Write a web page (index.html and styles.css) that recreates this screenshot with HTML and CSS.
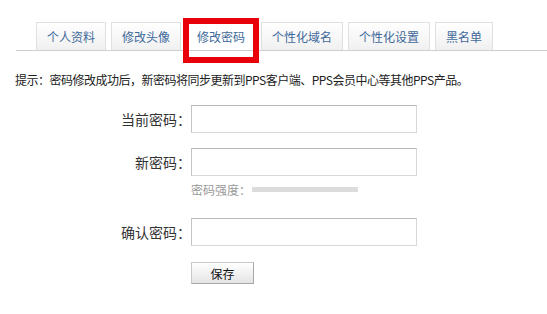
FILE: index.html
```html
<!DOCTYPE html>
<html lang="zh-CN">
<head>
<meta charset="utf-8">
<link rel="stylesheet" href="styles.css">
</head>
<body>
<div class="page">
  <div class="tabs">
    <a class="tab">个人资料</a>
    <a class="tab">修改头像</a>
    <a class="tab active">修改密码<span class="mark"></span></a>
    <a class="tab">个性化域名</a>
    <a class="tab">个性化设置</a>
    <a class="tab">黑名单</a>
  </div>
  <p class="hint">提示：密码修改成功后，新密码将同步更新到PPS客户端、PPS会员中心等其他PPS产品。</p>
  <div class="form">
    <div class="row">
      <label class="label">当前密码：</label>
      <input class="field" type="password">
    </div>
    <div class="row row-new">
      <label class="label">新密码：</label>
      <input class="field" type="password">
    </div>
    <div class="row row-strength">
      <span class="label"></span>
      <div class="strength"><span class="strength-text">密码强度：</span><span class="bar"></span></div>
    </div>
    <div class="row row-confirm">
      <label class="label">确认密码：</label>
      <input class="field" type="password">
    </div>
    <div class="row row-btn">
      <span class="label"></span>
      <button class="btn">保存</button>
    </div>
  </div>
</div>
</body>
</html>
```
FILE: styles.css
```css
html, body {
  margin: 0;
  padding: 0;
  background: #fff;
}
body {
  font-family: "Noto Sans CJK SC", "Liberation Sans", sans-serif;
  font-size: 12px;
  color: #333;
}
.page {
  width: 547px;
  height: 314px;
  overflow: hidden;
}
.tabs {
  display: flex;
  gap: 5px;
  margin: 22px 0 0 16px;
  padding-left: 20px;
  border-bottom: 1px solid #cfcfcf;
  height: 28px;
}
.tab {
  position: relative;
  box-sizing: border-box;
  height: 28px;
  padding: 0 10px;
  display: flex;
  align-items: center;
  border: 1px solid #e0e0e0;
  border-bottom: none;
  background: linear-gradient(#ffffff, #f0f0f0);
  color: #40699a;
  font-size: 12px;
  line-height: 1;
}
.tab.active {
  background: #fff;
  border-color: #fff;
}
.mark {
  position: absolute;
  left: -4px;
  top: -5px;
  width: 76px;
  height: 45px;
  box-sizing: border-box;
  border: 6px solid #e8000b;
}
.hint {
  margin: 21px 0 0 15px;
  line-height: 16px;
  font-size: 12px;
  letter-spacing: -0.5px;
  color: #222;
}
.form {
  margin-top: 17px;
  display: flex;
  flex-direction: column;
}
.row {
  display: flex;
  align-items: center;
}
.label {
  width: 191px;
  flex: none;
  text-align: right;
  font-size: 14px;
  color: #333;
}
.field {
  box-sizing: border-box;
  width: 226px;
  height: 28px;
  margin: 0;
  padding: 0 4px;
  border: 1px solid #d8d8d8;
  border-top-color: #b8b8b8;
  border-left-color: #c4c4c4;
  background: #fff;
  outline: none;
}
.row-new {
  margin-top: 15px;
}
.row-strength {
  margin-top: 6px;
  height: 14px;
}
.strength {
  display: flex;
  align-items: center;
}
.strength-text {
  font-size: 12px;
  color: #999;
}
.bar {
  display: block;
  width: 106px;
  height: 5px;
  background: #dcdcdc;
  margin-left: 1px;
}
.row-confirm {
  margin-top: 22px;
}
.row-btn {
  margin-top: 16px;
}
.btn {
  box-sizing: border-box;
  width: 63px;
  height: 22px;
  margin: 0;
  padding: 0;
  border: 1px solid #a8a8a8;
  border-top-color: #c8c8c8;
  border-left-color: #c8c8c8;
  background: linear-gradient(#ffffff, #e4e4e4);
  font-family: "Noto Sans CJK SC", sans-serif;
  font-size: 12px;
  color: #111;
}
```
